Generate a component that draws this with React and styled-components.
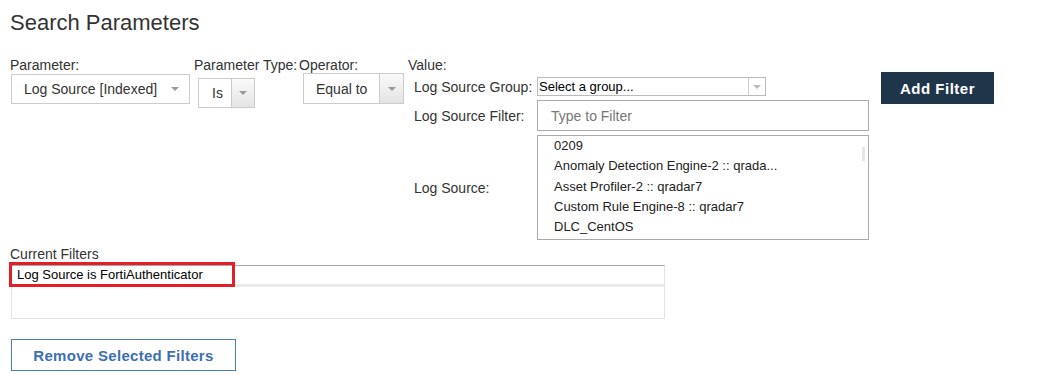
import React from 'react'
import styled, { createGlobalStyle } from 'styled-components'

const GlobalStyle = createGlobalStyle`
  body {
    margin: 0;
    background: #fff;
    font-family: "Liberation Sans", Arial, sans-serif;
  }
  * { box-sizing: border-box; }
`

const Page = styled.div`
  padding: 10px 0 0 10px;
  color: #333;
`

const Title = styled.h1`
  margin: 0;
  font-size: 22px;
  line-height: 26px;
  font-weight: normal;
  color: #333;
`

const ParamRow = styled.div`
  display: flex;
  align-items: flex-start;
  margin-top: 21px;
`

const Column = styled.div`
  width: ${p => p.width ? p.width + 'px' : 'auto'};
  flex-shrink: 0;
  white-space: nowrap;
`

const Label = styled.div`
  font-size: 14px;
  line-height: 16px;
  color: #333;
`

const Select = styled.div`
  display: flex;
  align-items: stretch;
  width: ${p => p.width}px;
  height: ${p => p.height}px;
  margin: ${p => p.margin || '0'};
  border: 1px solid #ccc;
  background: #fff;
  font-size: 14px;
  color: #333;
  overflow: hidden;
`

const SelectText = styled.div`
  flex: 1;
  display: flex;
  align-items: center;
  padding-left: ${p => p.pad}px;
  overflow: hidden;
  white-space: nowrap;
`

const ArrowBox = styled.div`
  width: ${p => p.width}px;
  flex-shrink: 0;
  display: flex;
  align-items: center;
  justify-content: center;
  border-left: ${p => p.divider ? '1px solid #ccc' : 'none'};
  background: ${p => p.shaded ? 'linear-gradient(#fafafa, #e4e4e4)' : 'transparent'};
`

const Caret = styled.span`
  width: 0;
  height: 0;
  border-left: 4px solid transparent;
  border-right: 4px solid transparent;
  border-top: 4px solid ${p => p.color || '#999'};
`

const ValueRow = styled.div`
  display: flex;
  align-items: flex-start;
`

const ValueGrid = styled.div`
  display: grid;
  grid-template-columns: 123px 332px;
  grid-template-rows: 19px 31px 105px;
  row-gap: 4px;
  margin: 4px 0 0 6px;
  align-items: center;
`

const GroupSelect = styled(Select)`
  font-size: 13px;
  color: #000;
  border-color: #bbb;
`

const FilterInput = styled.div`
  height: 31px;
  border: 1px solid #aaa;
  display: flex;
  align-items: center;
  padding-left: 13px;
  font-size: 14px;
  color: #777;
`

const ListBox = styled.div`
  position: relative;
  height: 105px;
  border: 1px solid #aaa;
  padding: 0 0 0 16px;
  font-size: 13px;
  color: #222;
  align-self: stretch;
`

const ListItem = styled.div`
  line-height: 20.3px;
  white-space: nowrap;
`

const ScrollThumb = styled.div`
  position: absolute;
  right: 3px;
  top: 11px;
  width: 3px;
  height: 14px;
  background: #e6e6e6;
`

const AddButton = styled.button`
  margin: 15px 0 0 12px;
  width: 113px;
  height: 32px;
  border: none;
  background: #1f364a;
  color: #fff;
  font-family: inherit;
  font-size: 15px;
  font-weight: bold;
  letter-spacing: 0.5px;
`

const SectionLabel = styled(Label)`
  margin-top: 6px;
`

const FilterTable = styled.div`
  position: relative;
  margin: 3px 0 0 1px;
  width: 654px;
  height: 54px;
  border: 1px solid #e2e2e2;
  border-top-color: #a8a8a8;
`

const FilterRow = styled.div`
  position: relative;
  height: 21px;
  line-height: 17px;
  padding-left: 5px;
  font-size: 13px;
  color: #000;
  border-bottom: 3px solid #e9e9e9;
`

const Highlight = styled.div`
  position: absolute;
  left: -3px;
  top: -4px;
  width: 226px;
  height: 25px;
  border: 3px solid #e31e26;
`

const RemoveButton = styled.button`
  display: block;
  margin: 20px 0 0 1px;
  width: 225px;
  height: 32px;
  background: #fff;
  border: 1px solid #4a7cc0;
  color: #3d6fb4;
  font-family: inherit;
  font-size: 15px;
  font-weight: bold;
  letter-spacing: 0.3px;
`

const sources = [
  '0209',
  'Anomaly Detection Engine-2 :: qrada...',
  'Asset Profiler-2 :: qradar7',
  'Custom Rule Engine-8 :: qradar7',
  'DLC_CentOS',
]

export default function App() {
  return (
    <Page>
      <GlobalStyle />
      <Title>Search Parameters</Title>

      <ParamRow>
        <Column width={184}>
          <Label>Parameter:</Label>
          <Select width={179} height={30} margin="1px 0 0 1px">
            <SelectText pad={12}>Log Source [Indexed]</SelectText>
            <ArrowBox width={28}><Caret /></ArrowBox>
          </Select>
        </Column>
        <Column width={105}>
          <Label>Parameter Type:</Label>
          <Select width={57} height={30} margin="5px 0 0 4px">
            <SelectText pad={13}>Is</SelectText>
            <ArrowBox width={23} divider shaded><Caret /></ArrowBox>
          </Select>
        </Column>
        <Column width={109}>
          <Label>Operator:</Label>
          <Select width={101} height={31} margin="0 0 0 4px">
            <SelectText pad={12}>Equal to</SelectText>
            <ArrowBox width={24} divider shaded><Caret /></ArrowBox>
          </Select>
        </Column>
        <ValueRow>
          <Column>
            <Label>Value:</Label>
            <ValueGrid>
              <Label>Log Source Group:</Label>
              <GroupSelect width={229} height={19}>
                <SelectText pad={1}>Select a group...</SelectText>
                <ArrowBox width={17} divider><Caret color="#b5bccb" /></ArrowBox>
              </GroupSelect>
              <Label>Log Source Filter:</Label>
              <FilterInput>Type to Filter</FilterInput>
              <Label>Log Source:</Label>
              <ListBox>
                {sources.map(s => <ListItem key={s}>{s}</ListItem>)}
                <ScrollThumb />
              </ListBox>
            </ValueGrid>
          </Column>
          <AddButton>Add Filter</AddButton>
        </ValueRow>
      </ParamRow>

      <SectionLabel>Current Filters</SectionLabel>
      <FilterTable>
        <FilterRow>
          Log Source is FortiAuthenticator
          <Highlight />
        </FilterRow>
      </FilterTable>

      <RemoveButton>Remove Selected Filters</RemoveButton>
    </Page>
  )
}
